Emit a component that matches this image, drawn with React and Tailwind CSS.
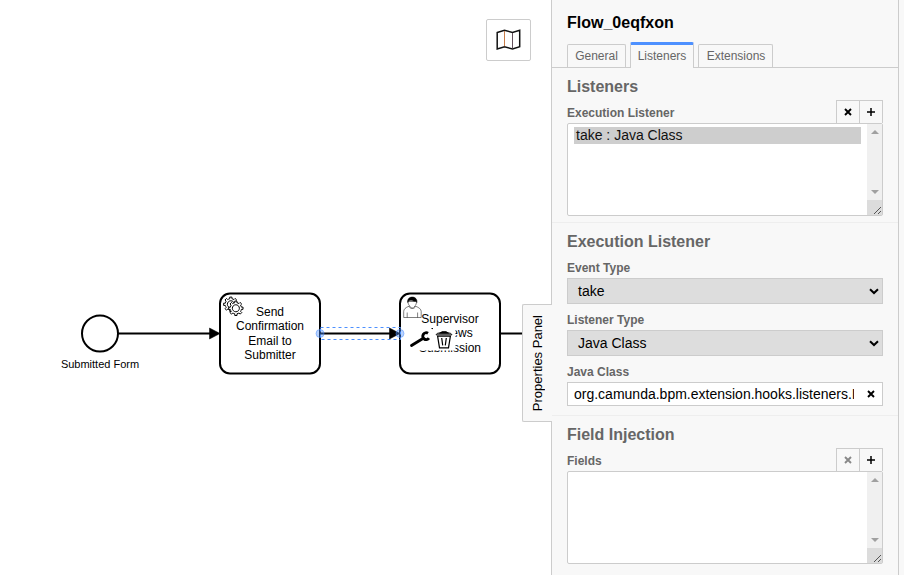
import React from "react";

const GEAR =
  "v -1.71335 c 0.352326,-0.0705 0.703932,-0.17838 1.047628,-0.32133 0.344416,-0.14465 0.665822,-0.32133 0.966377,-0.52145 l 1.19431,1.18005 1.567487,-1.57688 -1.195028,-1.18014 c 0.403376,-0.61394 0.683079,-1.29908 0.825447,-2.01824 l 1.622133,-0.01 v -2.2196 l -1.636514,0.01 c -0.07333,-0.35153 -0.178319,-0.70024 -0.323564,-1.04372 -0.145244,-0.34406 -0.321407,-0.6644 -0.522735,-0.96217 l 1.131035,-1.13631 -1.583305,-1.56293 -1.129598,1.13589 c -0.614052,-0.40108 -1.302883,-0.68093 -2.022633,-0.82247 l 0.0093,-1.61852 h -2.241173 l 0.0042,1.63124 c -0.353763,0.0736 -0.705369,0.17977 -1.049785,0.32371 -0.344415,0.14437 -0.665102,0.32092 -0.9635006,0.52006 l -1.1698628,-1.15823 -1.5667691,1.5792 1.1684265,1.15669 c -0.4026573,0.61283 -0.68308,1.29797 -0.8247287,2.01713 l -1.6588041,0.003 v 2.22174 l 1.6724648,-0.006 c 0.073327,0.35077 0.1797598,0.70243 0.3242851,1.04472 0.1452428,0.34448 0.3214064,0.6644 0.5227339,0.96066 l -1.1993431,1.19723 1.5840256,1.56011 1.1964668,-1.19348 c 0.6140517,0.40346 1.3028827,0.68232 2.0233517,0.82331 l 7.19e-4,1.69892 h 2.226848 z m 0.221462,-3.9957 c -1.788948,0.7502 -3.8576,-0.0928 -4.6097055,-1.87438 -0.7521065,-1.78321 0.090598,-3.84627 1.8802645,-4.59604 1.78823,-0.74936 3.856881,0.0929 4.608987,1.87437 0.752106,1.78165 -0.0906,3.84612 -1.879546,4.59605 z";

function Diagram() {
  return (
    <svg width="551" height="575" viewBox="0 0 551 575" className="block">
      <g fill="white" stroke="black" strokeWidth="2">
        <circle cx="100" cy="333.5" r="18" />
        <rect x="220" y="293.5" width="100" height="80" rx="10" />
        <rect x="400" y="293.5" width="100" height="80" rx="10" />
        <path d="M118 333.5H218M320 333.5H398M500 333.5H551" fill="none" />
      </g>
      <path d="M209.5 328L220 333.5L209.5 339ZM389.5 328L400 333.5L389.5 339Z" stroke="black" strokeWidth="0.5" />

      {/* service task gears */}
      <g fill="white" stroke="black" strokeWidth="1">
        <path d={"m 232,311.5 " + GEAR} />
        <circle cx="236" cy="309.8" r="5" stroke="none" />
        <path d={"m 237,315.5 " + GEAR} />
      </g>

      {/* user task figure */}
      <g fill="white" stroke="black" strokeWidth="0.5">
        <path d="M409 306.2C405.500 307.500 403.700 309.200 403.700 311.500V317.500H421.200V311.500C421.200 309.200 419 307.500 415.500 306.200C415 309.200 409.500 309.200 409 306.200Z" />
        <path d="M407.200 317.500V312.500M417.600 317.500V312.500" />
        <path d="M408 301.500C408 304 409 305.500 410 306.200C409.500 308.500 415 308.500 414.600 306.200C416 305.200 416.500 303.500 416.500 301.500Z" />
        <path d="M407.700 302.500C406.500 295.200 418 295.200 416.900 302.500C416.500 300 414.500 302 412.500 300.600C410.500 299.700 408.200 300.500 407.700 302.500Z" fill="black" />
      </g>

      <g fontFamily="Liberation Sans, Arial, sans-serif" fontSize="12" textAnchor="middle" fill="#000">
        <text x="270" y="316">Send</text>
        <text x="270" y="330.400">Confirmation</text>
        <text x="270" y="344.800">Email to</text>
        <text x="270" y="358.600">Submitter</text>
        <text x="450" y="323">Supervisor</text>
        <text x="450" y="337.400">Reviews</text>
        <text x="450" y="351.800">Submission</text>
        <text x="100" y="368" fontSize="11">Submitted Form</text>
      </g>

      {/* selected connection outline and end handles */}
      <rect x="320.500" y="327.500" width="80" height="12" fill="none" stroke="#4d90ff" strokeDasharray="3 3" />
      <g fill="#4d90ff" fillOpacity="0.4" stroke="#4d90ff" strokeOpacity="0.5">
        <circle cx="320" cy="333.500" r="4" />
        <circle cx="400" cy="333.500" r="4" />
      </g>

      {/* context pad */}
      <g fill="white">
        <rect x="408" y="328" width="23.500" height="22.500" />
        <rect x="431" y="330" width="3" height="20.500" />
        <rect x="433" y="328" width="22.500" height="22.500" />
      </g>
      <path d="M411.500 345.500L422.500 338.700" stroke="black" strokeWidth="2.800" strokeLinecap="round" />
      <path d="M428 333.300A3.400 3.400 0 1 0 428.900 338.200" stroke="black" strokeWidth="2.900" fill="none" />
      <g fill="none" stroke="black" strokeWidth="1.200">
        <path d="M437.600 336.200L439.500 347.800H448.500L450.400 336.200Z" />
        <path d="M436 334.800Q436.300 333 440 332.800H448Q451.600 333 452 334.800Z" strokeWidth="0.900" />
        <path d="M440 333.200L442.200 331.800H446L448 333.200Z" fill="black" />
        <path d="M441.700 338L442.700 345.300M446.300 338L445.300 345.300" />
      </g>
    </svg>
  );
}

function MapIcon() {
  return (
    <svg width="25" height="22" viewBox="0 0 25 22" fill="none">
      <path d="M1.200 3.500L8.500 1.300L16.500 3.500L23.700 1.300V17.700L16.500 19.900L8.500 17.700L1.200 19.900Z" stroke="#111" strokeWidth="1.500" />
      <path d="M8.500 2V17.200" stroke="#c87c48" />
      <path d="M16.500 4V19.200" stroke="#64505c" />
    </svg>
  );
}

function Cross() {
  return (
    <svg width="8" height="8" viewBox="0 0 8 8">
      <path d="M1 1L7 7M7 1L1 7" stroke="currentColor" strokeWidth="1.900" />
    </svg>
  );
}

function Plus() {
  return (
    <svg width="8" height="8" viewBox="0 0 8 8">
      <path d="M0 4H8M4 0V8" stroke="black" strokeWidth="1.500" />
    </svg>
  );
}

function Heading({ children }) {
  return <h3 className="h-5 text-[16px] leading-5 font-bold text-[#666]">{children}</h3>;
}

function Label({ children }) {
  return <div className="mt-2 mb-[2px] h-4 text-[12px] leading-4 font-bold text-[#666]">{children}</div>;
}

function ListHeader({ label, muted }) {
  return (
    <div className="mt-[3px] flex h-[23px] justify-between">
      <span className="pt-[5px] text-[12px] leading-4 font-bold text-[#666]">{label}</span>
      <div className="flex border border-b-0 border-[#ccc]">
        <button className={muted ? "flex w-[22px] items-center justify-center text-[#888]" : "flex w-[22px] items-center justify-center text-black"}>
          <Cross />
        </button>
        <button className="flex w-[23px] items-center justify-center border-l border-[#ccc]">
          <Plus />
        </button>
      </div>
    </div>
  );
}

function ListBox({ children }) {
  return (
    <div className="flex h-[93px] rounded-[2px] border border-[#ccc] bg-white">
      <div className="flex-1 px-[6px] pt-[3px]">{children}</div>
      <div className="flex w-[15px] flex-col bg-[#f0f0f0]">
        <div className="flex flex-1 flex-col items-center justify-between py-[6px]">
          <svg width="8" height="4" viewBox="0 0 8 4"><path d="M0 4L4 0L8 4Z" fill="#a0a0a0" /></svg>
          <svg width="8" height="4" viewBox="0 0 8 4"><path d="M0 0L4 4L8 0Z" fill="#a0a0a0" /></svg>
        </div>
        <svg width="15" height="15" viewBox="0 0 15 15" className="bg-[#dcdcdc]">
          <path d="M7 14L14 7M11 14L14 11" stroke="#555" fill="none" />
        </svg>
      </div>
    </div>
  );
}

function Select({ children }) {
  return (
    <div className="flex h-[26px] items-center justify-between border border-[#ccc] bg-[#ddd] pr-[3px] pl-[10px] text-[14px] leading-4 text-black">
      <span>{children}</span>
      <svg width="10" height="7" viewBox="0 0 10 7">
        <path d="M1 1.200L5 5L9 1.200" stroke="black" strokeWidth="2" fill="none" />
      </svg>
    </div>
  );
}

export default function App() {
  return (
    <div className="flex h-[575px] w-[904px] overflow-hidden bg-[#f8f8f8] font-['Liberation_Sans',Arial,sans-serif]">
      <main className="relative w-[551px] shrink-0 bg-white">
        <Diagram />
        <button className="absolute top-[19px] left-[486px] flex h-[42px] w-[45px] items-center justify-center rounded-[2px] border border-[#ccc] bg-white">
          <MapIcon />
        </button>
        <div className="absolute top-[304px] left-[522px] z-10 flex h-[118px] w-[30px] items-center justify-center rounded-l-[2px] border border-r-0 border-[#ccc] bg-[#f8f8f8]">
          <span className="rotate-180 text-[13px] leading-4 whitespace-nowrap text-black [writing-mode:vertical-rl]">Properties Panel</span>
        </div>
      </main>

      <aside className="w-[348px] shrink-0 border-x border-[#ccc]">
        <header className="flex h-[68px] flex-col justify-between border-b border-[#ccc] px-[15px] pt-[13px]">
          <h1 className="h-5 text-[16px] leading-5 font-bold text-black">Flow_0eqfxon</h1>
          <nav className="-mb-px flex items-end gap-1 text-[12px] leading-4 text-[#666]">
            <span className="mb-px h-[23px] w-[59px] rounded-t-[2px] border border-b-0 border-[#ccc] pt-[3px] text-center">General</span>
            <span className="h-[26px] w-[64px] rounded-t-[2px] border border-t-[3px] border-b-0 border-[#ccc] border-t-[#4d90ff] bg-[#f8f8f8] pt-[3px] text-center">Listeners</span>
            <span className="mb-px h-[23px] w-[75px] rounded-t-[2px] border border-b-0 border-[#ccc] pt-[3px] pl-px text-center">Extensions</span>
          </nav>
        </header>

        <section className="h-[155px] border-b border-[#eee] px-[15px] pt-[9px]">
          <Heading>Listeners</Heading>
          <ListHeader label="Execution Listener" />
          <ListBox>
            <div className="h-[17px] bg-[#cecece] pl-[2px] text-[14px] leading-[17px] text-[#111]">take : Java Class</div>
          </ListBox>
        </section>

        <section className="h-[193px] border-b border-[#eee] px-[15px] pt-[9px]">
          <Heading>Execution Listener</Heading>
          <Label>Event Type</Label>
          <Select>take</Select>
          <Label>Listener Type</Label>
          <Select>Java Class</Select>
          <Label>Java Class</Label>
          <div className="flex h-6 items-center border border-[#ccc] bg-white pl-[6px] text-[14px] leading-4 text-black">
            <span className="w-[280px] overflow-hidden whitespace-nowrap">org.camunda.bpm.extension.hooks.listeners.I</span>
            <span className="ml-[13px]"><Cross /></span>
          </div>
        </section>

        <section className="px-[15px] pt-[9px]">
          <Heading>Field Injection</Heading>
          <ListHeader label="Fields" muted />
          <ListBox />
        </section>
      </aside>
    </div>
  );
}
